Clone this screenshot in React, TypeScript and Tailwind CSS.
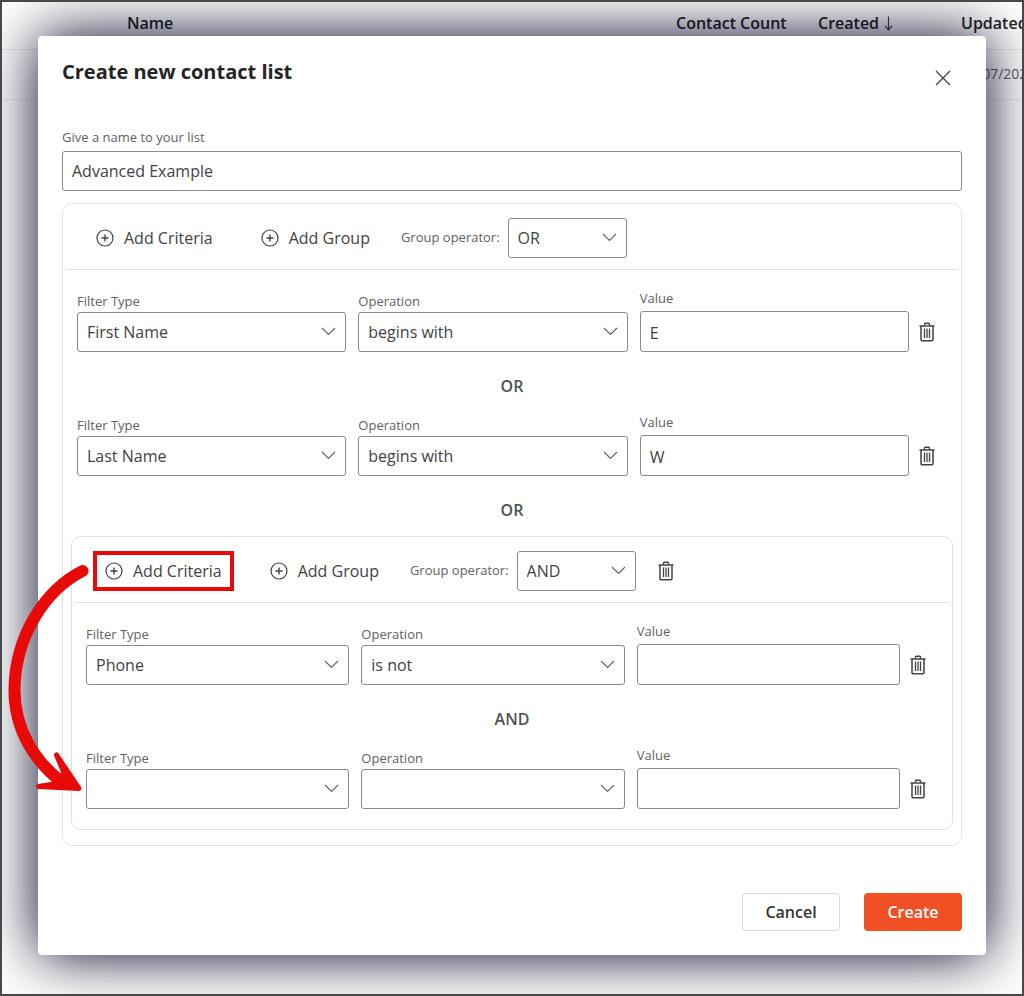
import { useId, useState } from "react";
import type { ReactNode } from "react";

type Criterion = { type: string; operation: string; value: string };

const filterTypes = ["First Name", "Last Name", "Phone"];
const operations = ["is", "is not", "begins with"];
const operators = ["OR", "AND"];

const nameCriteria: Criterion[] = [
  { type: "First Name", operation: "begins with", value: "E" },
  { type: "Last Name", operation: "begins with", value: "W" },
];

const phoneCriteria: Criterion[] = [
  { type: "Phone", operation: "is not", value: "" },
  { type: "", operation: "", value: "" },
];

function TrashIcon() {
  return (
    <svg width="16" height="20" viewBox="0 0 16 20" fill="none" stroke="#424242" aria-hidden="true">
      <path d="M0.5 4h15" strokeWidth="1.5" />
      <path d="M5.5 3.5V2a.8.8 0 0 1 .8-.8h3.4a.8.8 0 0 1 .8.8v1.5" strokeWidth="1.4" />
      <path d="M2 4v13.5a1.200 1.200 0 0 0 1.200 1.200h9.600a1.200 1.200 0 0 0 1.200-1.200V4" strokeWidth="1.5" />
      <path d="M5.5 6.500v9.500M8 6.500v9.500M10.500 6.500v9.500" strokeWidth="1.300" />
    </svg>
  );
}

function PlusIcon() {
  return (
    <svg width="18" height="18" viewBox="0 0 18 18" fill="none" stroke="#424242" aria-hidden="true">
      <circle cx="9" cy="9" r="8" strokeWidth="1.2" />
      <path d="M9 5.5v7M5.500 9h7" strokeWidth="1.4" />
    </svg>
  );
}

function Dropdown({ id, options, initial }: { id: string; options: string[]; initial: string }) {
  const [value, setValue] = useState(initial);
  return (
    <div className="relative">
      <select
        id={id}
        value={value}
        onChange={(e) => setValue(e.target.value)}
        className="block h-10 w-full appearance-none rounded-[3px] border border-[#8a8a8a] bg-white px-[9px] pb-px text-[#424242]"
      >
        <option value=""></option>
        {options.map((option) => (
          <option key={option} value={option}>
            {option}
          </option>
        ))}
      </select>
      <svg
        className="pointer-events-none absolute top-[15px] right-[10px]"
        width="15"
        height="9"
        viewBox="0 0 15 9"
        fill="none"
        stroke="#616161"
        aria-hidden="true"
      >
        <path d="M1 1l6.5 6.500L14 1" strokeWidth="1.1" />
      </svg>
    </div>
  );
}

function DeleteButton({ label }: { label: string }) {
  return (
    <button type="button" aria-label={label} className="flex h-10 w-[38px] items-center justify-center pr-0.5">
      <TrashIcon />
    </button>
  );
}

function CriterionRow({ criterion }: { criterion: Criterion }) {
  const id = useId();
  return (
    <div className="flex items-end">
      <div className="grid flex-1 grid-cols-3 items-end gap-3">
        <div>
          <label htmlFor={`${id}-type`} className="mb-px block text-[13px] leading-5 text-[#616161]">
            Filter Type
          </label>
          <Dropdown id={`${id}-type`} options={filterTypes} initial={criterion.type} />
        </div>
        <div>
          <label htmlFor={`${id}-operation`} className="mb-px block text-[13px] leading-5 text-[#616161]">
            Operation
          </label>
          <Dropdown id={`${id}-operation`} options={operations} initial={criterion.operation} />
        </div>
        <div>
          <label htmlFor={`${id}-value`} className="mb-[3px] block text-[13px] leading-5 text-[#616161]">
            Value
          </label>
          <input
            id={`${id}-value`}
            type="text"
            defaultValue={criterion.value}
            className="block h-[41px] w-full rounded-[3px] border border-[#8a8a8a] bg-white px-[9px] pt-[3px] text-[#424242]"
          />
        </div>
      </div>
      <DeleteButton label="Delete criteria" />
    </div>
  );
}

function Connector({ children }: { children: ReactNode }) {
  return (
    <div className="flex h-[60px] items-center justify-center pt-2 font-semibold text-[#505050]">
      {children}
    </div>
  );
}

function GroupHeader({
  operator,
  highlighted = false,
  removable = false,
}: {
  operator: string;
  highlighted?: boolean;
  removable?: boolean;
}) {
  const id = useId();
  return (
    <div className="mx-[3px] flex items-center border-b border-[#e0e0e0] pt-[14px] pb-[11px] pl-[18px]">
      <button
        type="button"
        className={
          highlighted
            ? "flex h-10 items-center gap-[10px] px-3 text-[#424242] outline-4 -outline-offset-4 outline-[#e80909]"
            : "flex h-10 items-center gap-[10px] px-3 text-[#424242]"
        }
      >
        <PlusIcon />
        Add Criteria
      </button>
      <button type="button" className="ml-6 flex h-10 items-center gap-[10px] px-3 text-[#424242]">
        <PlusIcon />
        Add Group
      </button>
      <label htmlFor={id} className="ml-[19px] text-[13px] text-[#616161]">
        Group operator:
      </label>
      <div className="ml-2 w-[119px]">
        <Dropdown id={id} options={operators} initial={operator} />
      </div>
      {removable && (
        <div className="ml-3">
          <DeleteButton label="Delete group" />
        </div>
      )}
    </div>
  );
}

function ContactTable() {
  return (
    <table className="absolute inset-x-0 top-0 w-full table-fixed text-left whitespace-nowrap">
      <colgroup>
        <col className="w-[125px]" />
        <col />
        <col className="w-[142px]" />
        <col className="w-[143px]" />
        <col className="w-[61px]" />
      </colgroup>
      <thead>
        <tr className="h-[47px] border-b border-[#ebebeb] text-[#242424]">
          <td></td>
          <th className="pb-1 font-semibold">Name</th>
          <th className="pb-1 font-semibold">Contact Count</th>
          <th className="pb-1 font-semibold">
            <span className="flex items-center gap-[5px]">
              Created
              <svg width="9" height="15" viewBox="0 0 9 15" fill="none" stroke="#4a3a5c" aria-hidden="true">
                <path d="M4.5 0.500v13M1 10l3.500 3.800L8 10" strokeWidth="1.2" />
              </svg>
            </span>
          </th>
          <th className="pb-1 font-semibold">Updated</th>
        </tr>
      </thead>
      <tbody>
        <tr className="h-[50px] border-b border-[#ebebeb] text-sm text-[#616161]">
          <td></td>
          <td></td>
          <td></td>
          <td></td>
          <td>10/07/2022</td>
        </tr>
      </tbody>
    </table>
  );
}

export default function App() {
  return (
    <div className="relative min-h-screen overflow-hidden border-2 border-[#484848] bg-white px-9 pt-[34px] pb-[39px] font-['Open_Sans','Noto_Sans',sans-serif] text-base">
      <ContactTable />

      <div
        role="dialog"
        aria-labelledby="dialog-title"
        className="relative rounded-[4px] bg-white px-6 pb-6 shadow-[0_0_60px_#010021]"
      >
        <header className="flex h-[91px] items-start justify-between pt-5">
          <h1 id="dialog-title" className="text-xl leading-8 font-bold text-[#242424]">
            Create new contact list
          </h1>
          <button type="button" aria-label="Close" className="mt-0.5 flex h-10 w-[38px] items-center justify-center">
            <svg width="16" height="16" viewBox="0 0 16 16" fill="none" stroke="#424242" aria-hidden="true">
              <path d="M1 1l14 14M15 1L1 15" strokeWidth="1.3" />
            </svg>
          </button>
        </header>

        <label htmlFor="list-name" className="mb-1 block text-[13px] leading-5 text-[#616161]">
          Give a name to your list
        </label>
        <input
          id="list-name"
          type="text"
          defaultValue="Advanced Example"
          className="block h-10 w-full rounded-[3px] border border-[#8a8a8a] bg-white px-[9px] text-[#424242]"
        />

        <section className="mt-3 rounded-[10px] border border-[#e0e0e0] pb-[15px]">
          <GroupHeader operator="OR" />
          <div className="px-[14px] pt-[18px]">
            <CriterionRow criterion={nameCriteria[0]} />
            <Connector>OR</Connector>
            <CriterionRow criterion={nameCriteria[1]} />
            <Connector>OR</Connector>
          </div>

          <section className="mx-2 rounded-[10px] border border-[#e0e0e0] pb-5">
            <GroupHeader operator="AND" highlighted removable />
            <div className="px-[14px] pt-[18px]">
              <CriterionRow criterion={phoneCriteria[0]} />
              <Connector>AND</Connector>
              <CriterionRow criterion={phoneCriteria[1]} />
            </div>
          </section>
        </section>

        <footer className="mt-[47px] flex justify-end gap-6">
          <button
            type="button"
            className="h-[38px] w-[98px] rounded-[4px] border border-[#d8d8d8] bg-white font-semibold text-[#333333]"
          >
            Cancel
          </button>
          <button type="button" className="h-[38px] w-[98px] rounded-[4px] bg-[#f04e23] font-semibold text-white">
            Create
          </button>
        </footer>

        {/* arrow from the highlighted button to the row it adds */}
        <svg
          className="pointer-events-none absolute top-[524px] -left-[38px]"
          width="100"
          height="240"
          viewBox="0 560 100 240"
          fill="none"
          stroke="#e80909"
          strokeLinecap="round"
          strokeLinejoin="round"
          aria-hidden="true"
        >
          <path d="M82.500 571C45 590 15 636 14.500 690C14.500 730 35 762 63 783" strokeWidth="12" />
          <path d="M38.500 786.500L79 788.500L56.500 755L64 773L57 783.500Z" fill="#e80909" strokeWidth="5" />
        </svg>
      </div>
    </div>
  );
}
